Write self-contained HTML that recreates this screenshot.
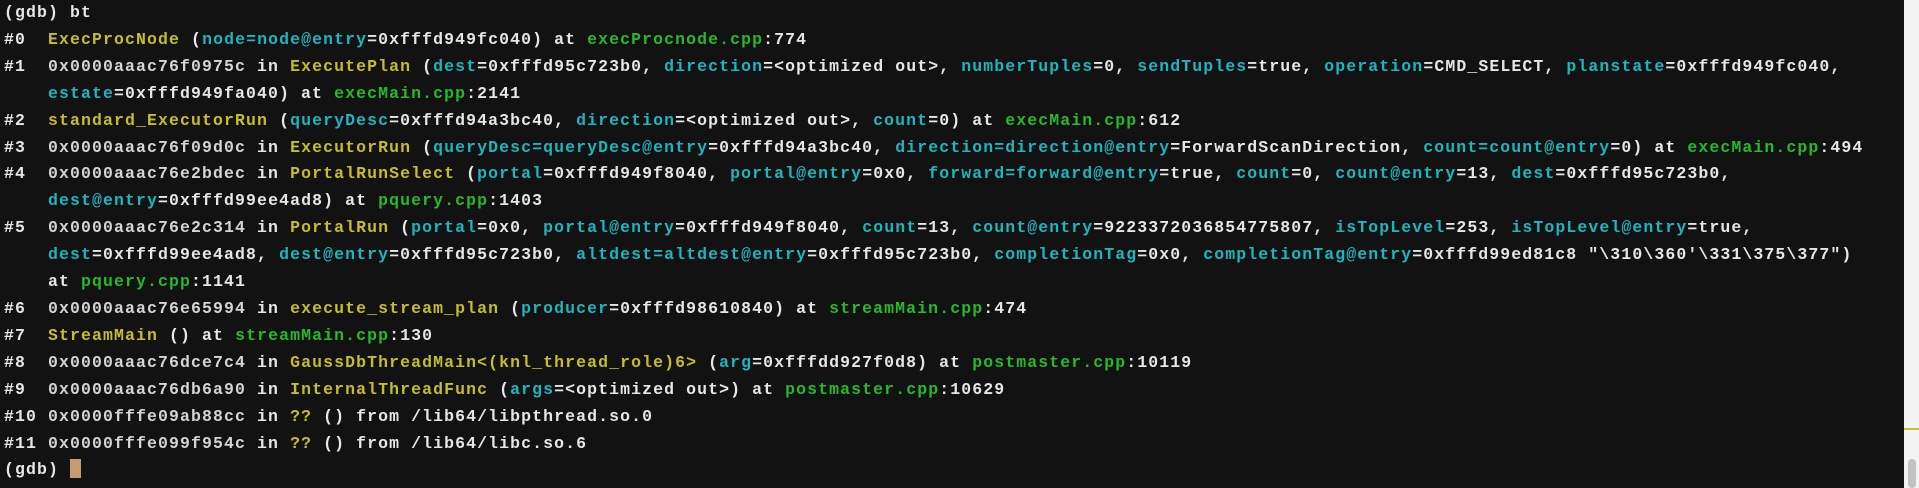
<!DOCTYPE html>
<html><head><meta charset="utf-8"><style>
html,body{margin:0;padding:0;background:#121212;width:1919px;height:488px;overflow:hidden}
#t{position:absolute;left:4px;top:0;font-family:"Liberation Mono",monospace;font-size:16.5px;font-weight:bold;letter-spacing:1.1px;line-height:26.9px;color:#e6e6e6;white-space:pre}
.y{color:#c5bd2e}.c{color:#1fb5bf}.g{color:#27b92c}.a{color:#d4d4d4}
.cur{display:inline-block;width:11px;height:19px;background:#c49a72;vertical-align:-4px}
#sb{position:absolute;left:1904px;top:0;width:15px;height:488px;background:#f3f3f3}
#mk{position:absolute;left:1904px;top:428px;width:15px;height:2px;background:#c8c030}
#th{position:absolute;left:1908px;top:459px;width:8px;height:29px;background:#c2c2c2;border-radius:4px}
</style></head><body>
<div id="t"><div>(gdb) bt</div><div>#0  <span class="y">ExecProcNode</span> (<span class="c">node=node@entry</span>=0xfffd949fc040) at <span class="g">execProcnode.cpp</span>:774</div><div>#1  <span class="a">0x0000aaac76f0975c</span> in <span class="y">ExecutePlan</span> (<span class="c">dest</span>=0xfffd95c723b0, <span class="c">direction</span>=&lt;optimized out&gt;, <span class="c">numberTuples</span>=0, <span class="c">sendTuples</span>=true, <span class="c">operation</span>=CMD_SELECT, <span class="c">planstate</span>=0xfffd949fc040,</div><div>    <span class="c">estate</span>=0xfffd949fa040) at <span class="g">execMain.cpp</span>:2141</div><div>#2  <span class="y">standard_ExecutorRun</span> (<span class="c">queryDesc</span>=0xfffd94a3bc40, <span class="c">direction</span>=&lt;optimized out&gt;, <span class="c">count</span>=0) at <span class="g">execMain.cpp</span>:612</div><div>#3  <span class="a">0x0000aaac76f09d0c</span> in <span class="y">ExecutorRun</span> (<span class="c">queryDesc=queryDesc@entry</span>=0xfffd94a3bc40, <span class="c">direction=direction@entry</span>=ForwardScanDirection, <span class="c">count=count@entry</span>=0) at <span class="g">execMain.cpp</span>:494</div><div>#4  <span class="a">0x0000aaac76e2bdec</span> in <span class="y">PortalRunSelect</span> (<span class="c">portal</span>=0xfffd949f8040, <span class="c">portal@entry</span>=0x0, <span class="c">forward=forward@entry</span>=true, <span class="c">count</span>=0, <span class="c">count@entry</span>=13, <span class="c">dest</span>=0xfffd95c723b0,</div><div>    <span class="c">dest@entry</span>=0xfffd99ee4ad8) at <span class="g">pquery.cpp</span>:1403</div><div>#5  <span class="a">0x0000aaac76e2c314</span> in <span class="y">PortalRun</span> (<span class="c">portal</span>=0x0, <span class="c">portal@entry</span>=0xfffd949f8040, <span class="c">count</span>=13, <span class="c">count@entry</span>=9223372036854775807, <span class="c">isTopLevel</span>=253, <span class="c">isTopLevel@entry</span>=true,</div><div>    <span class="c">dest</span>=0xfffd99ee4ad8, <span class="c">dest@entry</span>=0xfffd95c723b0, <span class="c">altdest=altdest@entry</span>=0xfffd95c723b0, <span class="c">completionTag</span>=0x0, <span class="c">completionTag@entry</span>=0xfffd99ed81c8 "\310\360'\331\375\377")</div><div>    at <span class="g">pquery.cpp</span>:1141</div><div>#6  <span class="a">0x0000aaac76e65994</span> in <span class="y">execute_stream_plan</span> (<span class="c">producer</span>=0xfffd98610840) at <span class="g">streamMain.cpp</span>:474</div><div>#7  <span class="y">StreamMain</span> () at <span class="g">streamMain.cpp</span>:130</div><div>#8  <span class="a">0x0000aaac76dce7c4</span> in <span class="y">GaussDbThreadMain&lt;(knl_thread_role)6&gt;</span> (<span class="c">arg</span>=0xfffdd927f0d8) at <span class="g">postmaster.cpp</span>:10119</div><div>#9  <span class="a">0x0000aaac76db6a90</span> in <span class="y">InternalThreadFunc</span> (<span class="c">args</span>=&lt;optimized out&gt;) at <span class="g">postmaster.cpp</span>:10629</div><div>#10 <span class="a">0x0000fffe09ab88cc</span> in <span class="y">??</span> () from /lib64/libpthread.so.0</div><div>#11 <span class="a">0x0000fffe099f954c</span> in <span class="y">??</span> () from /lib64/libc.so.6</div><div>(gdb) <span class="cur"></span></div></div>
<div id="sb"></div><div id="mk"></div><div id="th"></div>
</body></html>
